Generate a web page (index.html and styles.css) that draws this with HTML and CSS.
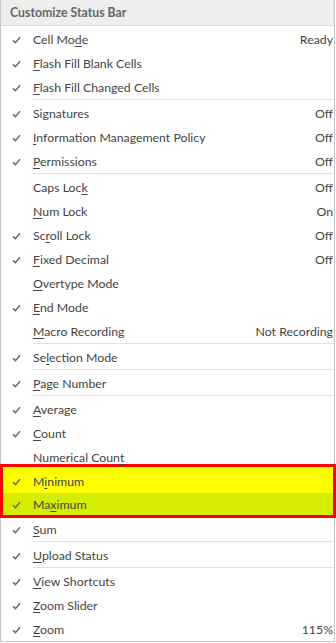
FILE: index.html
```html
<!DOCTYPE html>
<html>
<head>
<meta charset="utf-8">
<link rel="stylesheet" href="styles.css">
</head>
<body>
<div class="menu">
  <div class="head">Customize Status Bar</div>

  <div class="row on"><span class="chk"><svg viewBox="0 0 9 8"><path d="M1 4.2 L3.4 6.6 L8 1.2"/></svg></span><span class="lbl">Cell Mo<u>d</u>e</span><span class="val">Ready</span></div>
  <div class="row on"><span class="chk"><svg viewBox="0 0 9 8"><path d="M1 4.2 L3.4 6.6 L8 1.2"/></svg></span><span class="lbl"><u>F</u>lash Fill Blank Cells</span></div>
  <div class="row on"><span class="chk"><svg viewBox="0 0 9 8"><path d="M1 4.2 L3.4 6.6 L8 1.2"/></svg></span><span class="lbl"><u>F</u>lash Fill Changed Cells</span></div>
  <div class="sep"></div>
  <div class="row on"><span class="chk"><svg viewBox="0 0 9 8"><path d="M1 4.2 L3.4 6.6 L8 1.2"/></svg></span><span class="lbl">Signatures</span><span class="val">Off</span></div>
  <div class="row on"><span class="chk"><svg viewBox="0 0 9 8"><path d="M1 4.2 L3.4 6.6 L8 1.2"/></svg></span><span class="lbl"><u>I</u>nformation Management Policy</span><span class="val">Off</span></div>
  <div class="row on"><span class="chk"><svg viewBox="0 0 9 8"><path d="M1 4.2 L3.4 6.6 L8 1.2"/></svg></span><span class="lbl"><u>P</u>ermissions</span><span class="val">Off</span></div>
  <div class="sep"></div>
  <div class="row"><span class="chk"></span><span class="lbl">Caps Loc<u>k</u></span><span class="val">Off</span></div>
  <div class="row"><span class="chk"></span><span class="lbl"><u>N</u>um Lock</span><span class="val">On</span></div>
  <div class="row on"><span class="chk"><svg viewBox="0 0 9 8"><path d="M1 4.2 L3.4 6.6 L8 1.2"/></svg></span><span class="lbl">Sc<u>r</u>oll Lock</span><span class="val">Off</span></div>
  <div class="row on"><span class="chk"><svg viewBox="0 0 9 8"><path d="M1 4.2 L3.4 6.6 L8 1.2"/></svg></span><span class="lbl"><u>F</u>ixed Decimal</span><span class="val">Off</span></div>
  <div class="row"><span class="chk"></span><span class="lbl"><u>O</u>vertype Mode</span></div>
  <div class="row on"><span class="chk"><svg viewBox="0 0 9 8"><path d="M1 4.2 L3.4 6.6 L8 1.2"/></svg></span><span class="lbl"><u>E</u>nd Mode</span></div>
  <div class="row"><span class="chk"></span><span class="lbl"><u>M</u>acro Recording</span><span class="val">Not Recording</span></div>
  <div class="sep"></div>
  <div class="row on"><span class="chk"><svg viewBox="0 0 9 8"><path d="M1 4.2 L3.4 6.6 L8 1.2"/></svg></span><span class="lbl">Se<u>l</u>ection Mode</span></div>
  <div class="sep"></div>
  <div class="row on"><span class="chk"><svg viewBox="0 0 9 8"><path d="M1 4.2 L3.4 6.6 L8 1.2"/></svg></span><span class="lbl"><u>P</u>age Number</span></div>
  <div class="sep"></div>
  <div class="row on"><span class="chk"><svg viewBox="0 0 9 8"><path d="M1 4.2 L3.4 6.6 L8 1.2"/></svg></span><span class="lbl"><u>A</u>verage</span></div>
  <div class="row on"><span class="chk"><svg viewBox="0 0 9 8"><path d="M1 4.2 L3.4 6.6 L8 1.2"/></svg></span><span class="lbl"><u>C</u>ount</span></div>
  <div class="row"><span class="chk"></span><span class="lbl">Numerical Coun<u>t</u></span></div>
  <div class="hl">
    <div class="row on min"><span class="chk"><svg viewBox="0 0 9 8"><path d="M1 4.2 L3.4 6.6 L8 1.2"/></svg></span><span class="lbl">M<u>i</u>nimum</span></div>
    <div class="row on max"><span class="chk"><svg viewBox="0 0 9 8"><path d="M1 4.2 L3.4 6.6 L8 1.2"/></svg></span><span class="lbl">Ma<u>x</u>imum</span></div>
  </div>
  <div class="row on"><span class="chk"><svg viewBox="0 0 9 8"><path d="M1 4.2 L3.4 6.6 L8 1.2"/></svg></span><span class="lbl"><u>S</u>um</span></div>
  <div class="sep"></div>
  <div class="row on"><span class="chk"><svg viewBox="0 0 9 8"><path d="M1 4.2 L3.4 6.6 L8 1.2"/></svg></span><span class="lbl"><u>U</u>pload Status</span></div>
  <div class="sep"></div>
  <div class="row on"><span class="chk"><svg viewBox="0 0 9 8"><path d="M1 4.2 L3.4 6.6 L8 1.2"/></svg></span><span class="lbl"><u>V</u>iew Shortcuts</span></div>
  <div class="row on"><span class="chk"><svg viewBox="0 0 9 8"><path d="M1 4.2 L3.4 6.6 L8 1.2"/></svg></span><span class="lbl"><u>Z</u>oom Slider</span></div>
  <div class="row on"><span class="chk"><svg viewBox="0 0 9 8"><path d="M1 4.2 L3.4 6.6 L8 1.2"/></svg></span><span class="lbl"><u>Z</u>oom</span><span class="val">115%</span></div>
</div>
</body>
</html>
```

FILE: styles.css
```css
html, body {
  margin: 0;
  padding: 0;
  background: #ffffff;
}

.menu {
  width: 333px;
  height: 641px;
  border: 1px solid #c6c6c6;
  border-top: none;
  background: #ffffff;
  font-family: Lato, "Liberation Sans", sans-serif;
  font-size: 12.3px;
  color: #444444;
}

.head {
  height: 25px;
  line-height: 26px;
  background: #eeeeee;
  border-bottom: 1px solid #dcdcdc;
  margin-bottom: 1px;
  padding-left: 9px;
  font-weight: bold;
  color: #666666;
}

.row {
  display: flex;
  align-items: center;
  box-sizing: border-box;
  height: 24px;
  line-height: 23px;
  padding: 1px 1px 0 0;
  white-space: nowrap;
}

.chk {
  flex: 0 0 32px;
  display: flex;
  align-items: center;
  height: 23px;
}

.chk svg {
  width: 9px;
  height: 8px;
  margin-left: 11px;
  margin-top: 1px;
  fill: none;
  stroke: #666666;
  stroke-width: 1.4;
}

.lbl {
  flex: 1 1 auto;
}

.val {
  flex: 0 0 auto;
}

u {
  text-decoration: underline;
  text-underline-offset: 2px;
}

.sep {
  height: 1px;
  margin: 0 0 1px 32px;
  background: #e1e1e1;
}

.hl {
  margin: -5px -2px -1px -1px;
  border: 3px solid #ff0000;
}

.hl .chk {
  flex-basis: 30px;
}

.hl .chk svg {
  margin-left: 9px;
}

.min {
  background: #ffff00;
  height: 26px;
  padding-top: 3px;
}

.max {
  background: #d4ed00;
  height: 22px;
  padding-top: 0;
}
```
